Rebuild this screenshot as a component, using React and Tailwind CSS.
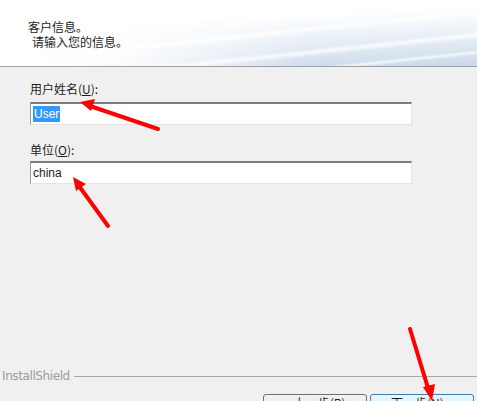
export default function App() {
  const cjk = { fontFamily: '"Microsoft YaHei", "Noto Sans CJK SC", sans-serif' };

  return (
    <div className="relative w-[477px] h-[401px] overflow-hidden bg-[#f0f0f0] text-[#1e1e1e]" style={cjk}>
      {/* header */}
      <div className="relative h-[67px] border-b border-[#a0a0a0] bg-white overflow-hidden">
        <div className="absolute inset-0 bg-[linear-gradient(178deg,#ffffff_0%,#ffffff_30%,#eef3f9_55%,#dce6f1_78%,#c9d8e9_100%)]" />
        <div className="absolute inset-0 bg-[linear-gradient(174deg,transparent_50%,rgba(255,255,255,0.85)_53%,transparent_57%,transparent_70%,rgba(255,255,255,0.8)_73%,transparent_77%,transparent_86%,rgba(255,255,255,0.7)_88%,transparent_91%)]" />
        <div className="absolute inset-0 bg-[linear-gradient(to_right,#ffffff_0%,rgba(255,255,255,0.9)_25%,rgba(255,255,255,0)_65%)]" />
        <div className="relative pl-[28px] pt-[19px] text-[12px] leading-[15px]">
          <div>客户信息。</div>
          <div className="pl-[4px]">请输入您的信息。</div>
        </div>
      </div>

      {/* form */}
      <div className="pl-[30px] pr-[64px] pt-[14px] text-[12px]">
        <div className="leading-[16px]">
          用户姓名(<span className="underline">U</span>):
        </div>
        <div className="mt-[5px] h-[23px] w-[382px] border-t-2 border-l border-t-[#7d7d7d] border-l-[#9a9a9a] border-r border-b border-r-[#e3e3e3] border-b-[#e3e3e3] bg-white flex items-center pl-[2px]">
          <span className="bg-[#3399ff] text-white px-[1px] leading-[16px]" style={{ fontFamily: '"Liberation Sans", sans-serif' }}>User</span>
        </div>

        <div className="mt-[17px] leading-[16px]">
          单位(<span className="underline">O</span>):
        </div>
        <div className="mt-[3px] h-[23px] w-[382px] border-t-2 border-l border-t-[#7d7d7d] border-l-[#9a9a9a] border-r border-b border-r-[#e3e3e3] border-b-[#e3e3e3] bg-white flex items-center pl-[2px]">
          <span className="text-[#1e1e1e] leading-[16px]" style={{ fontFamily: '"Liberation Sans", sans-serif' }}>china</span>
        </div>
      </div>

      {/* footer */}
      <div className="absolute left-0 right-0 top-[367px]">
        <div className="flex items-center">
          <span className="pl-[2px] text-[12px] text-[#9c9c9c]" style={{ fontFamily: '"DejaVu Sans", sans-serif', letterSpacing: '-0.4px' }}>InstallShield</span>
          <div className="ml-[4px] flex-1 h-px bg-[#a8a8a8]" />
        </div>
        <div className="flex justify-end gap-[3px] pr-[3px] mt-[9px]">
          <div className="w-[104px] h-[24px] rounded-[3px] border border-[#707070] bg-[linear-gradient(#f2f2f2,#ebebeb_50%,#dddddd_50%,#cfcfcf)] flex justify-center pt-0 text-[12px] leading-[16px]">
            &lt; 上一步(<span className="underline">B</span>)
          </div>
          <div className="w-[104px] h-[24px] rounded-[3px] border border-[#3c7fb1] bg-[linear-gradient(#eaf6fd,#d9f0fc_50%,#bee6fd_50%,#a7d9f5)] flex justify-center pt-0 text-[12px] leading-[16px]">
            下一步(<span className="underline">N</span>) &gt;
          </div>
        </div>
      </div>

      {/* red annotation arrows */}
      <svg className="absolute inset-0 pointer-events-none" width="477" height="401">
        <g stroke="#ff0000" strokeWidth="4" strokeLinecap="round" fill="#ff0000">
          <line x1="158" y1="129" x2="90" y2="106" />
          <polygon points="80,102 95,99 91,111" stroke="none" />
          <line x1="108" y1="226" x2="79" y2="186" />
          <polygon points="73,177 86,184 76,191" stroke="none" />
          <line x1="410" y1="329" x2="428" y2="388" />
          <polygon points="432,401 423,387 435,384" stroke="none" />
        </g>
      </svg>
    </div>
  );
}
